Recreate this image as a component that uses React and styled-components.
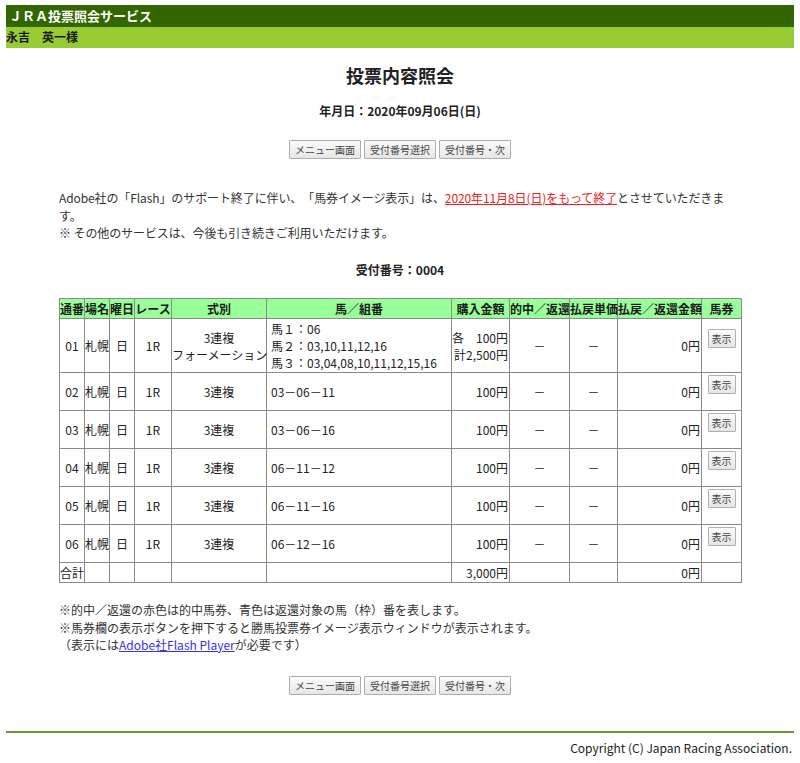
import React from "react";
import styled, { createGlobalStyle } from "styled-components";

const GlobalStyle = createGlobalStyle`
  html, body { background: #ffffff; }
  body {
    margin: 5px 6px 0;
    font-family: "Noto Sans CJK JP", "Noto Sans", sans-serif;
    font-size: 12px;
    color: #333333;
    text-spacing-trim: space-all;
  }
`;

const TopBar = styled.div`
  background: #336600;
  color: #ffffff;
  font-weight: bold;
  font-size: 13px;
  height: 22px;
  line-height: 22px;
  padding-left: 3px;
`;

const UserBar = styled.div`
  background: #99cc33;
  color: #1a1a1a;
  font-weight: bold;
  font-size: 12px;
  height: 20.5px;
  line-height: 20.5px;
`;

const Title = styled.h1`
  margin: 15.5px 0 0;
  font-size: 18px;
  line-height: 24px;
  font-weight: bold;
  text-align: center;
  color: #222222;
`;

const DateLine = styled.div`
  margin-top: 15px;
  font-weight: bold;
  line-height: 18px;
  text-align: center;
  color: #222222;
`;

const ButtonRow = styled.div`
  display: flex;
  justify-content: center;
  gap: 3px;
  margin-top: ${(p) => p.$top}px;
`;

const NavButton = styled.button`
  font-family: inherit;
  font-size: 10px;
  color: #444444;
  height: 19px;
  line-height: 17px;
  padding: 0 5px;
  background: linear-gradient(#fbfbfb, #e6e6e6);
  border: 1px solid #adadad;
  border-radius: 1px;
  cursor: pointer;
`;

const Content = styled.div`
  width: 682px;
  margin: 0 auto;
`;

const Notice = styled.p`
  margin: 30px 0 0;
  max-width: 672px;
  letter-spacing: -0.1px;
  line-height: 17.5px;
`;

const RedLink = styled.a`
  color: #ee2222;
  text-decoration: underline;
`;

const BlueLink = styled.a`
  color: #3333ee;
  text-decoration: underline;
`;

const ReceiptNo = styled.div`
  margin-top: 19px;
  font-weight: bold;
  line-height: 17.5px;
  text-align: center;
  color: #222222;
`;

const Table = styled.table`
  margin-top: 19.5px;
  width: 682px;
  table-layout: fixed;
  border-collapse: collapse;
  border: 1px solid #8a8a8a;
`;

const Th = styled.th`
  background: #99ff99;
  border: 1px solid #8a8a8a;
  padding: 1px 0;
  font-weight: bold;
  line-height: 17.5px;
  white-space: nowrap;
  text-align: center;
  color: #1a1a1a;
`;

const Td = styled.td`
  border: 1px solid #8a8a8a;
  padding: ${(p) =>
    p.$align === "left" ? "1px 0 1px 4px" : p.$align === "right" ? "1px 1px 1px 0" : "1px 0"};
  line-height: 17px;
  white-space: nowrap;
  text-align: ${(p) => p.$align || "center"};
  vertical-align: middle;
  color: #222222;
`;

const TicketButton = styled.button`
  font-family: inherit;
  font-size: 10px;
  color: #444444;
  height: 19px;
  line-height: 17px;
  padding: 0 3px;
  margin: 1px 0 15px;
  background: linear-gradient(#fbfbfb, #e6e6e6);
  border: 1px solid #b0b0b0;
  border-radius: 1px;
  display: inline-block;
  vertical-align: top;
`;

const Notes = styled.div`
  margin-top: 18px;
  line-height: 17.5px;
`;

const FooterRule = styled.div`
  margin-top: 36px;
  border-top: 2px solid #669933;
`;

const Copyright = styled.div`
  margin-top: 6px;
  padding-right: 2px;
  text-align: right;
  font-size: 12px;
  line-height: 17.5px;
  color: #222222;
`;

const colWidths = [25, 25, 25, 37, 95, 185, 58, 60, 48, 84, 40];
const headers = ["通番", "場名", "曜日", "レース", "式別", "馬／組番", "購入金額", "的中／返還", "払戻単価", "払戻／返還金額", "馬券"];

const rows = [
  {
    no: "01",
    type: ["3連複", "フォーメーション"],
    horses: ["馬１：06", "馬２：03,10,11,12,16", "馬３：03,04,08,10,11,12,15,16"],
    amount: ["各　100円", "計2,500円"],
  },
  { no: "02", type: ["3連複"], horses: ["03－06－11"], amount: ["100円"] },
  { no: "03", type: ["3連複"], horses: ["03－06－16"], amount: ["100円"] },
  { no: "04", type: ["3連複"], horses: ["06－11－12"], amount: ["100円"] },
  { no: "05", type: ["3連複"], horses: ["06－11－16"], amount: ["100円"] },
  { no: "06", type: ["3連複"], horses: ["06－12－16"], amount: ["100円"] },
];

const Lines = ({ items }) =>
  items.map((t, i) => (
    <React.Fragment key={i}>
      {i > 0 && <br />}
      {t}
    </React.Fragment>
  ));

const Buttons = ({ top }) => (
  <ButtonRow $top={top}>
    <NavButton type="button">メニュー画面</NavButton>
    <NavButton type="button">受付番号選択</NavButton>
    <NavButton type="button">受付番号・次</NavButton>
  </ButtonRow>
);

export default function App() {
  return (
    <>
      <GlobalStyle />
      <TopBar>ＪＲＡ投票照会サービス</TopBar>
      <UserBar>永吉　英一様</UserBar>
      <Title>投票内容照会</Title>
      <DateLine>年月日：2020年09月06日(日)</DateLine>
      <Buttons top={20} />
      <Content>
        <Notice>
          Adobe社の「Flash」のサポート終了に伴い、「馬券イメージ表示」は、
          <RedLink href="#">2020年11月8日(日)をもって終了</RedLink>
          とさせていただきま<wbr />す。
          <br />※ その他のサービスは、今後も引き続きご利用いただけます。
        </Notice>
        <ReceiptNo>受付番号：0004</ReceiptNo>
        <Table>
          <colgroup>
            {colWidths.map((w, i) => (
              <col key={i} style={{ width: w }} />
            ))}
          </colgroup>
          <thead>
            <tr>
              {headers.map((h) => (
                <Th key={h}>{h}</Th>
              ))}
            </tr>
          </thead>
          <tbody>
            {rows.map((r) => (
              <tr key={r.no}>
                <Td>{r.no}</Td>
                <Td>札幌</Td>
                <Td>日</Td>
                <Td>1R</Td>
                <Td>
                  <Lines items={r.type} />
                </Td>
                <Td $align="left">
                  <Lines items={r.horses} />
                </Td>
                <Td $align="right">
                  <Lines items={r.amount} />
                </Td>
                <Td>－</Td>
                <Td>－</Td>
                <Td $align="right">0円</Td>
                <Td>
                  <TicketButton type="button">表示</TicketButton>
                </Td>
              </tr>
            ))}
            <tr>
              <Td $align="left" style={{ paddingLeft: 0 }}>合計</Td>
              <Td />
              <Td />
              <Td />
              <Td />
              <Td />
              <Td $align="right">3,000円</Td>
              <Td />
              <Td />
              <Td $align="right">0円</Td>
              <Td />
            </tr>
          </tbody>
        </Table>
        <Notes>
          ※的中／返還の赤色は的中馬券、青色は返還対象の馬（枠）番を表します。
          <br />※馬券欄の表示ボタンを押下すると勝馬投票券イメージ表示ウィンドウが表示されます。
          <br />（表示には<BlueLink href="#">Adobe社Flash Player</BlueLink>が必要です）
        </Notes>
      </Content>
      <Buttons top={22.5} />
      <FooterRule />
      <Copyright>Copyright (C) Japan Racing Association.</Copyright>
    </>
  );
}
